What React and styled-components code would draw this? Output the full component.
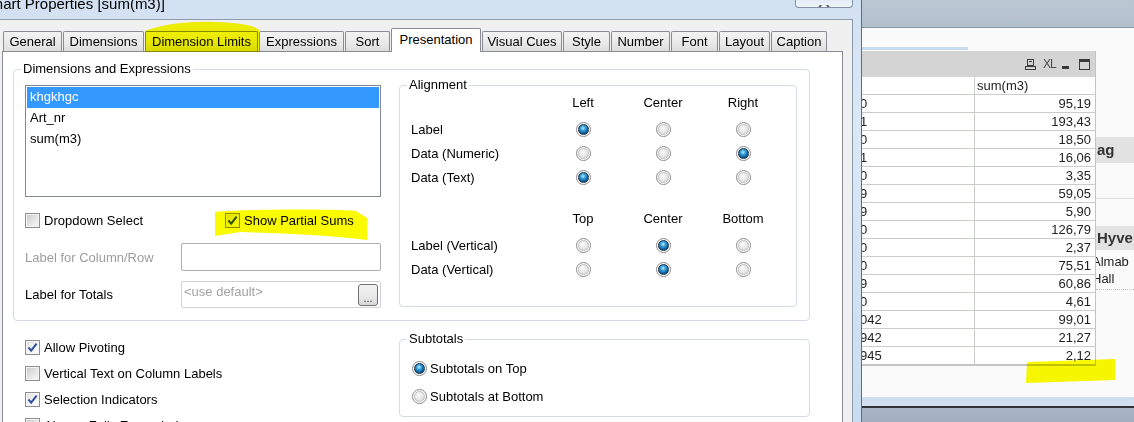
import React from "react";
import styled, { createGlobalStyle } from "styled-components";

const GlobalStyle = createGlobalStyle`
  html, body { margin: 0; padding: 0; background: #fff; }
  body {
    font-family: "Liberation Sans", Arial, sans-serif;
    font-size: 13px;
    color: #000;
  }
  * { box-sizing: border-box; }
`;

const tabs = [
  { label: "General", w: 59 },
  { label: "Dimensions", w: 81 },
  { label: "Dimension Limits", w: 113 },
  { label: "Expressions", w: 85 },
  { label: "Sort", w: 45 },
  { label: "Presentation", w: 90, active: true },
  { label: "Visual Cues", w: 80 },
  { label: "Style", w: 47 },
  { label: "Number", w: 59 },
  { label: "Font", w: 47 },
  { label: "Layout", w: 51 },
  { label: "Caption", w: 56 },
];

const horizontal = [
  { label: "Label", on: 0 },
  { label: "Data (Numeric)", on: 2 },
  { label: "Data (Text)", on: 0 },
];

const vertical = [
  { label: "Label (Vertical)", on: 1 },
  { label: "Data (Vertical)", on: 1 },
];

const rows = [
  ["10030", "95,19"],
  ["10031", "193,43"],
  ["10040", "18,50"],
  ["10041", "16,06"],
  ["10050", "3,35"],
  ["10059", "59,05"],
  ["10069", "5,90"],
  ["10070", "126,79"],
  ["10080", "2,37"],
  ["10090", "75,51"],
  ["10099", "60,86"],
  ["10100", "4,61"],
  ["1010042", "99,01"],
  ["1010942", "21,27"],
  ["1010945", "2,12"],
];

function CheckBox({ checked, children, muted }) {
  return (
    <CheckItem>
      <Box $checked={checked}>
        {checked && (
          <svg width="11" height="11" viewBox="0 0 11 11">
            <path d="M1.5 5.5 L4.2 8.6 L9.6 1.6" fill="none" stroke="#2f4f9f" strokeWidth="2" />
          </svg>
        )}
      </Box>
      <ItemText $muted={muted}>{children}</ItemText>
    </CheckItem>
  );
}

function Radio({ on }) {
  return (
    <RadioRing>
      <RadioDot $on={on} />
    </RadioRing>
  );
}

export default function App() {
  return (
    <>
      <GlobalStyle />
      <Screen>
        <Dialog>
          <TitleBar>
            <Title>Chart Properties [sum(m3)]</Title>
            <CloseButton>
              <svg width="56" height="7" viewBox="0 0 56 7">
                <path d="M25 0 L22 4 M31 0 L34 4" stroke="#5a5f66" strokeWidth="2" fill="none" />
              </svg>
            </CloseButton>
          </TitleBar>
          <Client>
            <TabRow>
              {tabs.map((t) => (
                <Tab key={t.label} $w={t.w} $active={t.active}>
                  {t.label}
                </Tab>
              ))}
            </TabRow>
            <Panel>
              <Group $mt={9} $w={797} $pb={12}>
                <Legend>Dimensions and Expressions</Legend>
                <GroupRow>
                  <LeftCol>
                    <ListBox>
                      <ListItem $selected>khgkhgc</ListItem>
                      <ListItem>Art_nr</ListItem>
                      <ListItem>sum(m3)</ListItem>
                    </ListBox>
                    <CheckRow>
                      <CheckSlot>
                        <CheckBox>Dropdown Select</CheckBox>
                      </CheckSlot>
                      <CheckBox checked>Show Partial Sums</CheckBox>
                    </CheckRow>
                    <FieldRow $mt={15}>
                      <FieldLabel $muted>Label for Column/Row</FieldLabel>
                      <TextBox $h={28} />
                    </FieldRow>
                    <FieldRow $mt={10}>
                      <FieldLabel>Label for Totals</FieldLabel>
                      <TextBox $h={27} $disabled>
                        <Placeholder>&lt;use default&gt;</Placeholder>
                        <DotsButton>...</DotsButton>
                      </TextBox>
                    </FieldRow>
                  </LeftCol>
                  <Group $w={398} $pb={25}>
                    <Legend>Alignment</Legend>
                    <AlignGrid>
                      <span />
                      <HeadCell>Left</HeadCell>
                      <HeadCell>Center</HeadCell>
                      <HeadCell>Right</HeadCell>
                      {horizontal.map((r) => (
                        <React.Fragment key={r.label}>
                          <RowLabel>{r.label}</RowLabel>
                          {[0, 1, 2].map((i) => (
                            <RadioCell key={i}>
                              <Radio on={r.on === i} />
                            </RadioCell>
                          ))}
                        </React.Fragment>
                      ))}
                    </AlignGrid>
                    <AlignGrid $mt={20}>
                      <span />
                      <HeadCell>Top</HeadCell>
                      <HeadCell>Center</HeadCell>
                      <HeadCell>Bottom</HeadCell>
                      {vertical.map((r) => (
                        <React.Fragment key={r.label}>
                          <RowLabel>{r.label}</RowLabel>
                          {[0, 1, 2].map((i) => (
                            <RadioCell key={i}>
                              <Radio on={r.on === i} />
                            </RadioCell>
                          ))}
                        </React.Fragment>
                      ))}
                    </AlignGrid>
                  </Group>
                </GroupRow>
              </Group>

              <LowerRow>
                <OptionList>
                  <OptionRow>
                    <CheckBox checked>Allow Pivoting</CheckBox>
                  </OptionRow>
                  <OptionRow>
                    <CheckBox>Vertical Text on Column Labels</CheckBox>
                  </OptionRow>
                  <OptionRow>
                    <CheckBox checked>Selection Indicators</CheckBox>
                  </OptionRow>
                  <OptionRow>
                    <CheckBox>Always Fully Expanded</CheckBox>
                  </OptionRow>
                </OptionList>
                <Group $w={411} $pt={7} $pb={6}>
                  <Legend>Subtotals</Legend>
                  <RadioRow>
                    <Radio on />
                    <span>Subtotals on Top</span>
                  </RadioRow>
                  <RadioRow>
                    <Radio />
                    <span>Subtotals at Bottom</span>
                  </RadioRow>
                </Group>
              </LowerRow>
            </Panel>
          </Client>
        </Dialog>

        <QvWindow>
          <QvTop />
          <Sheet>
            <TableCol>
              <SheetTab />
              <Caption>
                <svg width="11" height="11" viewBox="0 0 11 11" style={{ marginRight: 7 }}>
                  <rect x="2.5" y="0.5" width="6" height="6" fill="none" stroke="#3c3c3c" />
                  <line x1="4" y1="2.5" x2="7" y2="2.5" stroke="#3c3c3c" />
                  <rect x="0.5" y="7.5" width="10" height="3" fill="none" stroke="#3c3c3c" />
                </svg>
                <XL>XL</XL>
                <MinIcon />
                <MaxIcon />
              </Caption>
              <Row $head>
                <KeyCell />
                <ValueCell $head>sum(m3)</ValueCell>
              </Row>
              {rows.map(([k, v]) => (
                <Row key={k}>
                  <KeyCell>{k}</KeyCell>
                  <ValueCell>{v}</ValueCell>
                </Row>
              ))}
            </TableCol>
            <SideCol>
              <SideBar $mt={109} $h={26}>ag</SideBar>
              <SideRule />
              <SideBar $mt={27} $h={24}>Hyve</SideBar>
              <SideText $mt={3}>Almab</SideText>
              <SideText>Hall</SideText>
              <SideDots />
            </SideCol>
          </Sheet>
          <StatusBand />
        </QvWindow>

        <Highlights viewBox="0 0 1134 422">
          <path d="M145 31 C160 25 185 21 215 22 C240 23 254 25 259 30 L259 52 L145 52 Z" />
          <path d="M215 212 C250 209 330 209 356 211 L367 218 L367 240 C330 235 280 233 240 232 L215 236 Z" />
          <path d="M1027 362 L1115 359 L1115 380 L1026 383 Z" />
        </Highlights>
      </Screen>
    </>
  );
}

const Screen = styled.div`
  position: relative;
  width: 1134px;
  height: 422px;
  overflow: hidden;
  display: flex;
`;

const Dialog = styled.div`
  width: 862px;
  flex: none;
  display: flex;
  flex-direction: column;
  background: linear-gradient(180deg, #d2e1f2 0%, #dbe8f6 30%, #c9dcf0 100%);
  border-right: 1px solid #5f6d7e;
  padding-right: 8px;
`;

const TitleBar = styled.div`
  height: 19px;
  flex: none;
  display: flex;
  align-items: flex-start;
  justify-content: space-between;
`;

const Title = styled.div`
  margin: -5px 0 0 -16px;
  font-size: 15px;
  line-height: 18px;
  white-space: nowrap;
  color: #000;
`;

const CloseButton = styled.div`
  width: 58px;
  height: 8px;
  border: 1px solid #8193a8;
  border-top: none;
  border-radius: 0 0 4px 4px;
  background: linear-gradient(180deg, #e4ecf5, #f1f5fa);
  overflow: hidden;
`;

const Client = styled.div`
  flex: 1;
  display: flex;
  flex-direction: column;
  background: #f0f0f0;
  border-top: 1px solid #8c9aab;
  border-right: 1px solid #8c9aab;
  padding: 8px 0 0 2px;
`;

const TabRow = styled.div`
  height: 23px;
  display: flex;
  align-items: flex-end;
  padding-left: 1px;
`;

const Tab = styled.div`
  position: relative;
  z-index: ${(p) => (p.$active ? 2 : 0)};
  width: ${(p) => p.$w}px;
  height: ${(p) => (p.$active ? 24 : 20)}px;
  margin: 0 1px ${(p) => (p.$active ? -1 : 0)}px 0;
  border: 1px solid #898c95;
  border-bottom: none;
  border-radius: 2px 2px 0 0;
  background: ${(p) => (p.$active ? "#fff" : "linear-gradient(180deg, #f3f3f3 0%, #ebebeb 50%, #dedede 100%)")};
  display: flex;
  align-items: center;
  justify-content: center;
  padding-bottom: ${(p) => (p.$active ? 3 : 0)}px;
  font-size: 13px;
  white-space: nowrap;
`;

const Panel = styled.div`
  flex: 1 0 auto;
  width: 841px;
  background: #fff;
  border: 1px solid #898c95;
  border-bottom: none;
  padding-left: 10px;
`;

const Group = styled.fieldset`
  margin: ${(p) => p.$mt || 0}px 0 0 0;
  width: ${(p) => p.$w}px;
  min-width: 0;
  flex: none;
  border: 1px solid #d3dce6;
  border-radius: 4px;
  padding: ${(p) => p.$pt || 0}px 12px ${(p) => p.$pb || 0}px 11px;
`;

const Legend = styled.legend`
  margin-left: -4px;
  padding: 0 2px;
  font-size: 13px;
  line-height: 16px;
  color: #000;
`;

const GroupRow = styled.div`
  display: flex;
  align-items: flex-start;
  gap: 18px;
`;

const LeftCol = styled.div`
  width: 356px;
  margin-top: 8px;
  display: flex;
  flex-direction: column;
`;

const ListBox = styled.div`
  height: 112px;
  border: 1px solid #828790;
  background: #fff;
  padding: 1px;
`;

const ListItem = styled.div`
  height: 21px;
  line-height: 20px;
  padding-left: 3px;
  background: ${(p) => (p.$selected ? "#3399ff" : "transparent")};
  color: ${(p) => (p.$selected ? "#fff" : "#000")};
`;

const CheckRow = styled.div`
  margin-top: 16px;
  height: 15px;
  display: flex;
  align-items: center;
`;

const CheckSlot = styled.div`
  width: 200px;
`;

const CheckItem = styled.div`
  display: flex;
  align-items: center;
  gap: 4px;
  white-space: nowrap;
`;

const Box = styled.span`
  width: 15px;
  height: 15px;
  flex: none;
  border: 1px solid #8e8f8f;
  box-shadow: inset 0 0 0 1px #f4f4f4;
  background: ${(p) =>
    p.$checked
      ? "linear-gradient(135deg, #dedede 0%, #f6f6f6 60%, #ffffff 100%)"
      : "linear-gradient(135deg, #c6c6c6 0%, #e6e6e6 55%, #f7f7f7 100%)"};
  display: flex;
  align-items: center;
  justify-content: center;
`;

const ItemText = styled.span`
  color: ${(p) => (p.$muted ? "#9a9a9a" : "#000")};
`;

const FieldRow = styled.div`
  margin-top: ${(p) => p.$mt}px;
  display: flex;
  align-items: center;
`;

const FieldLabel = styled.div`
  width: 156px;
  color: ${(p) => (p.$muted ? "#9d9d9d" : "#000")};
  white-space: nowrap;
`;

const TextBox = styled.div`
  width: 200px;
  height: ${(p) => p.$h}px;
  border: 1px solid ${(p) => (p.$disabled ? "#cfd2d6" : "#abadb3")};
  border-radius: 2px;
  background: #fff;
  display: flex;
  justify-content: space-between;
  align-items: flex-start;
  padding: 2px 2px 0 2px;
`;

const Placeholder = styled.span`
  color: #a3a3a3;
  line-height: 16px;
`;

const DotsButton = styled.div`
  width: 20px;
  height: 22px;
  border: 1px solid #707070;
  border-radius: 3px;
  background: linear-gradient(180deg, #f2f2f2 0%, #ebebeb 50%, #d8d8d8 100%);
  display: flex;
  align-items: flex-end;
  justify-content: center;
  font-size: 11px;
  line-height: 13px;
  color: #333;
`;

const AlignGrid = styled.div`
  display: grid;
  grid-template-columns: 132px repeat(3, 80px);
  grid-auto-rows: 24px;
  margin-top: ${(p) => p.$mt || 0}px;
`;

const HeadCell = styled.div`
  text-align: center;
  padding-top: 2px;
  line-height: 16px;
`;

const RowLabel = styled.div`
  display: flex;
  align-items: center;
  white-space: nowrap;
`;

const RadioCell = styled.div`
  display: flex;
  align-items: center;
  justify-content: center;
`;

const RadioRing = styled.span`
  width: 15px;
  height: 15px;
  flex: none;
  border-radius: 50%;
  border: 1px solid #8a8a8a;
  background: #fff;
  display: flex;
  align-items: center;
  justify-content: center;
`;

const RadioDot = styled.span`
  width: 11px;
  height: 11px;
  border-radius: 50%;
  border: 1px solid ${(p) => (p.$on ? "#15304c" : "#bdbdbd")};
  background: ${(p) =>
    p.$on
      ? "radial-gradient(circle at 45% 35%, #c4ecff 0%, #3ba4dd 30%, #0d5f9c 65%, #0a3357 100%)"
      : "radial-gradient(circle at 40% 35%, #fbfbfb 0%, #e4e4e4 60%, #cfcfcf 100%)"};
`;

const LowerRow = styled.div`
  margin-top: 10px;
  display: flex;
  align-items: flex-start;
`;

const OptionList = styled.div`
  width: 386px;
  flex: none;
  padding: 3px 0 0 12px;
`;

const OptionRow = styled.div`
  height: 26px;
  display: flex;
  align-items: center;
`;

const RadioRow = styled.div`
  height: 28px;
  display: flex;
  align-items: center;
  gap: 3px;
  padding-left: 1px;
`;

const QvWindow = styled.div`
  flex: 1;
  min-width: 0;
  display: flex;
  flex-direction: column;
  overflow: hidden;
`;

const QvTop = styled.div`
  height: 28px;
  flex: none;
  background: linear-gradient(180deg, #bcc7d4 0%, #b2bfcd 100%);
  border-bottom: 1px solid #8894a2;
`;

const Sheet = styled.div`
  flex: 1;
  display: flex;
  background: #fafafa;
`;

const TableCol = styled.div`
  width: 268px;
  flex: none;
  margin-left: -34px;
  padding-top: 19px;
  display: flex;
  flex-direction: column;
`;

const SheetTab = styled.div`
  width: 106px;
  height: 3px;
  margin: 0 0 1px 34px;
  background: #c7d9ef;
`;

const Caption = styled.div`
  height: 26px;
  background: #d4d4d4;
  display: flex;
  align-items: center;
  justify-content: flex-end;
  padding-right: 5px;
  border-right: 1px solid #c3c3c3;
`;

const XL = styled.span`
  width: 12px;
  margin-right: 7px;
  font-size: 12px;
  letter-spacing: -1px;
  color: #4e4e4e;
  line-height: 12px;
`;

const MinIcon = styled.span`
  width: 7px;
  height: 3px;
  margin: 7px 10px 0 0;
  background: #3a3a3a;
`;

const MaxIcon = styled.span`
  width: 11px;
  height: 11px;
  border: 1px solid #3a3a3a;
  border-top-width: 3px;
`;

const Row = styled.div`
  height: 18px;
  display: flex;
  background: #fff;
  border-bottom: 1px solid #c9cec9;
  border-right: 1px solid #c3c3c3;
  &:last-child {
    border-bottom: 2px solid #c4c4c4;
    height: 19px;
  }
`;

const KeyCell = styled.div`
  width: 147px;
  flex: none;
  padding-left: 3px;
  border-right: 1px solid #c9cec9;
  line-height: 17px;
  white-space: nowrap;
  overflow: hidden;
  color: #222;
`;

const ValueCell = styled.div`
  flex: 1;
  line-height: 17px;
  text-align: ${(p) => (p.$head ? "left" : "right")};
  padding: ${(p) => (p.$head ? "0 0 0 2px" : "0 4px 0 0")};
  color: #222;
`;

const SideCol = styled.div`
  flex: 1;
  min-width: 0;
  overflow: hidden;
  display: flex;
  flex-direction: column;
`;

const SideBar = styled.div`
  margin-top: ${(p) => p.$mt}px;
  height: ${(p) => p.$h}px;
  line-height: ${(p) => p.$h}px;
  background: #e2e2e2;
  padding-left: 1px;
  font-size: 15px;
  font-weight: bold;
  color: #333;
  white-space: nowrap;
`;

const SideRule = styled.div`
  margin-top: 35px;
  height: 1px;
  background: #dfdfdf;
`;

const SideText = styled.div`
  margin: ${(p) => p.$mt || 0}px 0 0 -4px;
  line-height: 17px;
  color: #222;
  white-space: nowrap;
`;

const SideDots = styled.div`
  margin-top: 2px;
  border-bottom: 1px dotted #c4c4c4;
`;

const StatusBand = styled.div`
  height: 25px;
  flex: none;
  background: linear-gradient(180deg, #cddcee 0px, #d3e0ef 9px, #2f3134 9px, #2f3134 11px, #a9b5c4 11px, #a3afbf 100%);
`;

const Highlights = styled.svg`
  position: absolute;
  left: 0;
  top: 0;
  width: 1134px;
  height: 422px;
  pointer-events: none;
  mix-blend-mode: multiply;
  fill: #fbfb00;
`;
